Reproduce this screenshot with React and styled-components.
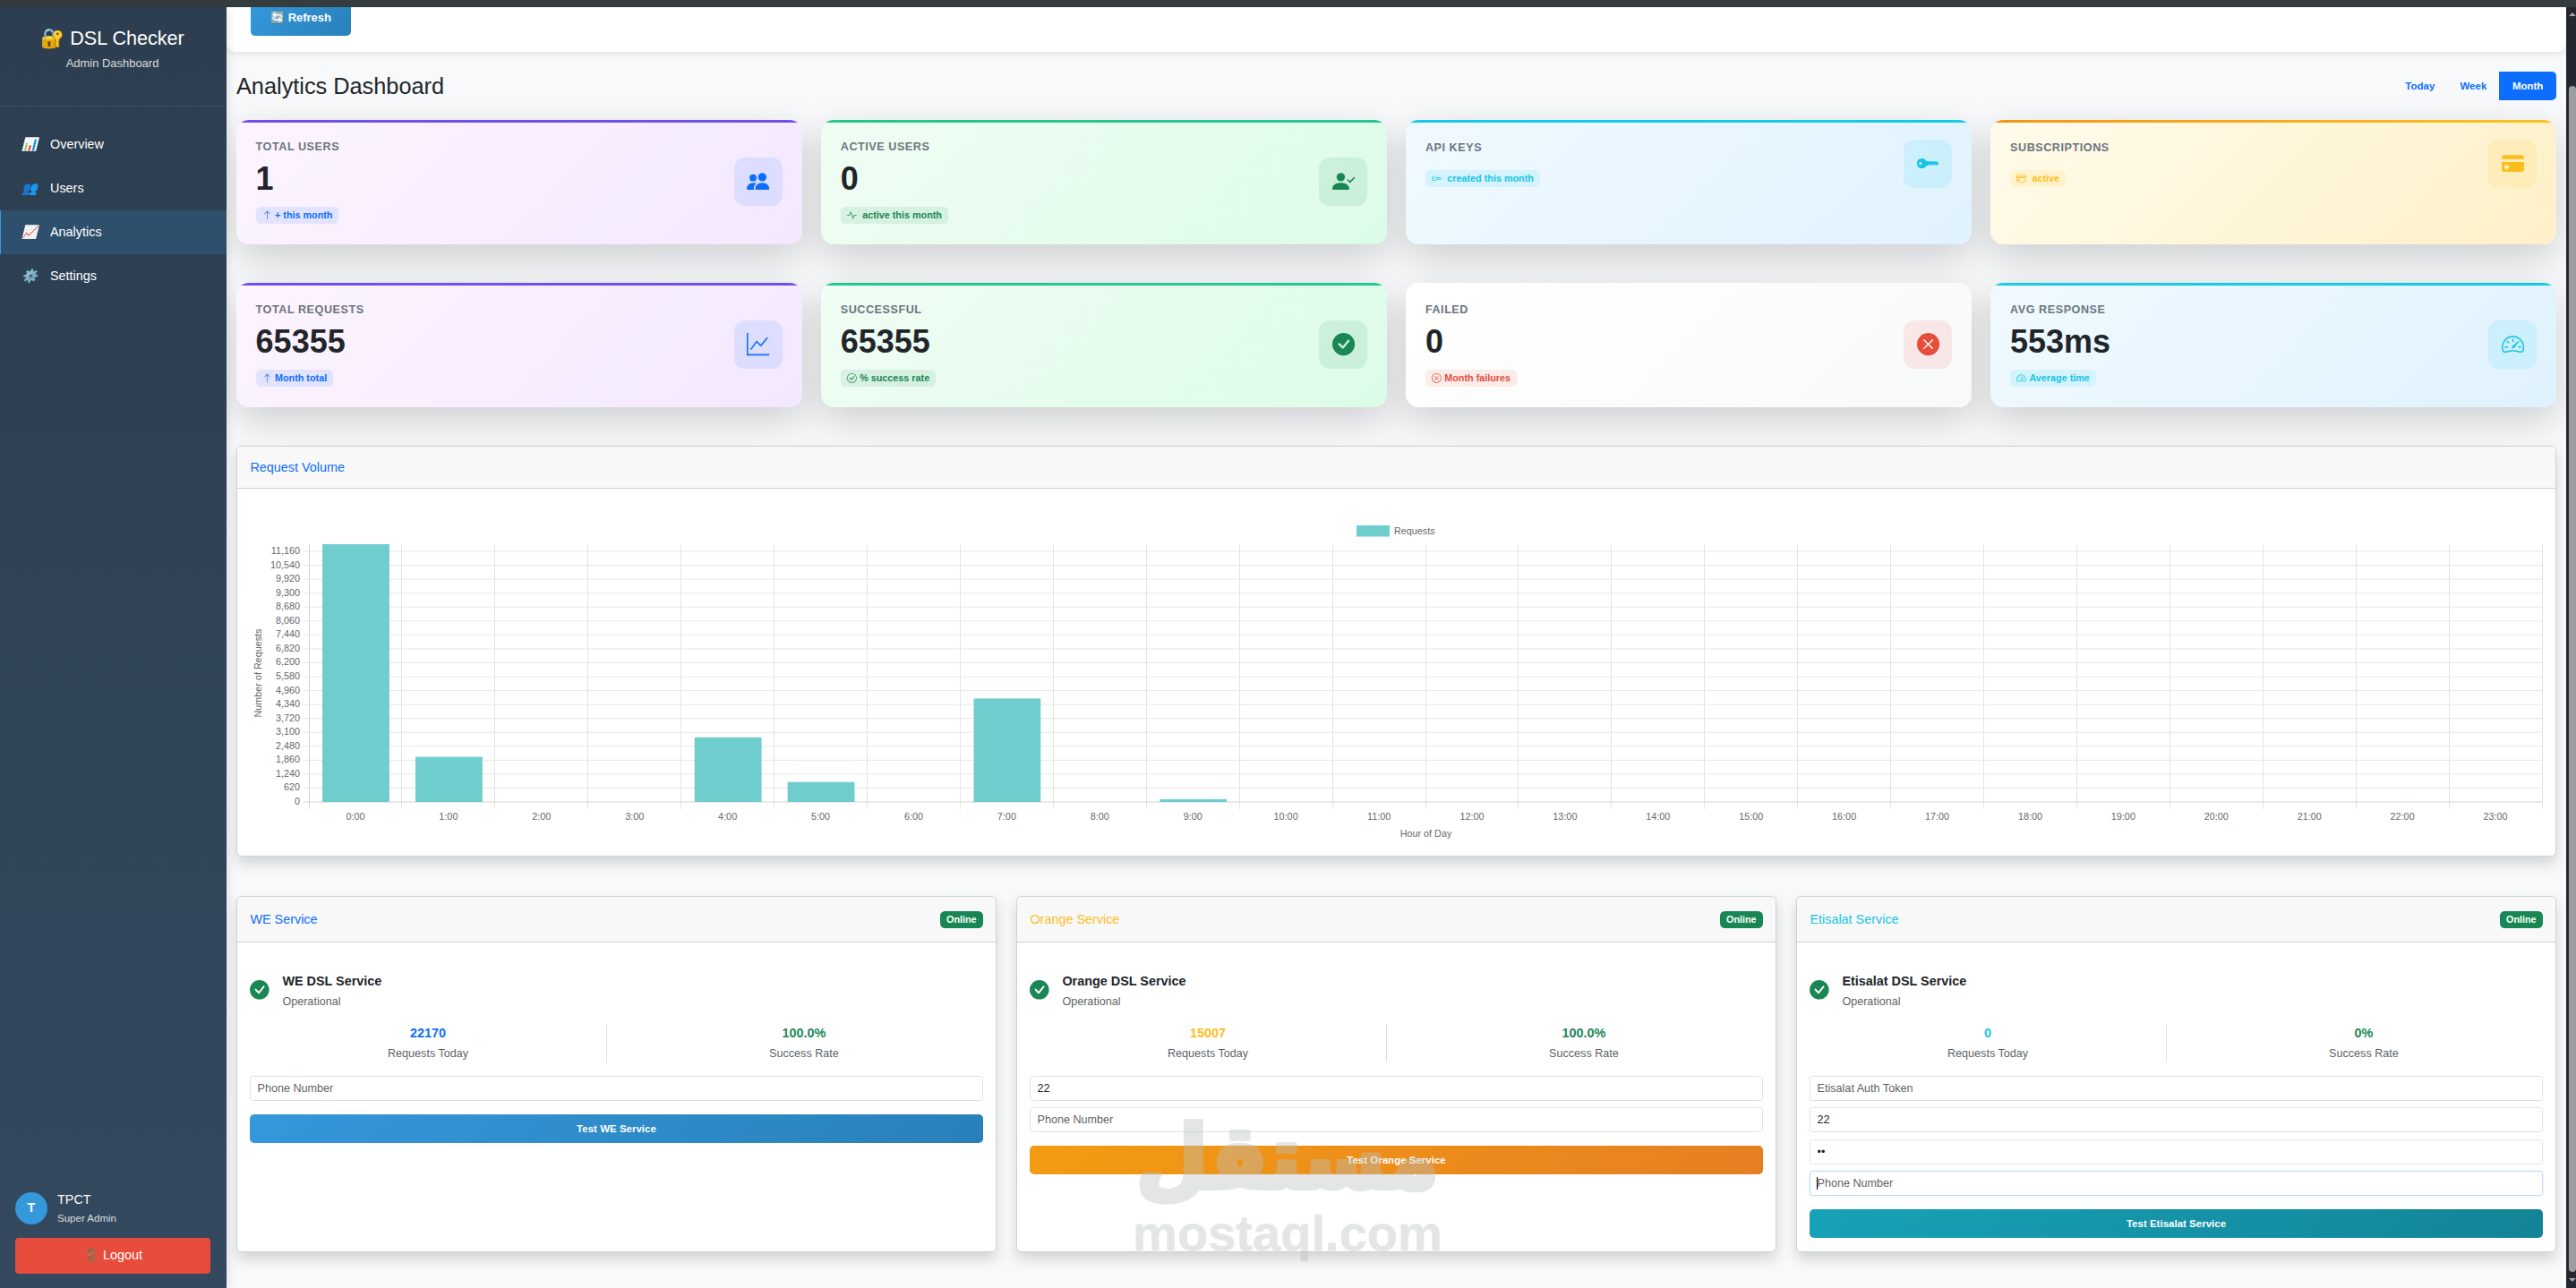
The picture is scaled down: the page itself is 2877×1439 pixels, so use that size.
import React from 'react'
import styled, { createGlobalStyle, css } from 'styled-components'
import {
    BsActivity, BsArrowUp, BsCheckCircle, BsCheckCircleFill, BsCreditCard, BsCreditCardFill,
    BsGraphUp, BsKey, BsKeyFill, BsPeopleFill, BsPersonCheckFill, BsSpeedometer2,
    BsXCircle, BsXCircleFill,
} from 'react-icons/bs'

const GlobalStyle = createGlobalStyle`
    * { box-sizing: border-box; }
    body {
        margin: 0;
        overflow: hidden;
        background: #f8f9fa;
        color: #212529;
        font-family: 'Liberation Sans', Arial, sans-serif;
        font-size: 14.4px;
        line-height: 1.5;
    }
    input, button { font-family: inherit; }
`

const tones = {
    blue: { color: '#0d6efd', soft: 'rgba(13, 110, 253, 0.1)' },
    green: { color: '#198754', soft: 'rgba(25, 135, 84, 0.1)' },
    cyan: { color: '#17c5e6', soft: 'rgba(13, 202, 240, 0.1)' },
    yellow: { color: '#fdbe1c', soft: 'rgba(255, 193, 7, 0.1)' },
    red: { color: '#e74c3c', soft: 'rgba(231, 76, 60, 0.1)' },
}

const surfaces = {
    purple: css`background: linear-gradient(135deg, #fdf4ff, #f3e8ff); --stripe: #6f50eb;`,
    green: css`background: linear-gradient(135deg, #f0fdf4, #dcfce7); --stripe: #25c78f;`,
    blue: css`background: linear-gradient(135deg, #f0f9ff, #e0f2fe); --stripe: #17c9e8;`,
    yellow: css`background: linear-gradient(135deg, #fffbeb, #fef0c8); --stripe: linear-gradient(90deg, #f39518, #ffc11f);`,
    plain: css`background: linear-gradient(135deg, #ffffff, #f8f9fa); --stripe: transparent;`,
}

const buttonFills = {
    blue: 'linear-gradient(135deg, #3498db, #2980b9)',
    orange: 'linear-gradient(135deg, #f39c12, #e67e22)',
    teal: 'linear-gradient(135deg, #17a2b8, #138496)',
}

const Window = styled.div`
    display: flex;
    flex-direction: column;
    width: 2877px;
    height: 1439px;
    overflow: hidden;
`

const BrowserEdge = styled.div`
    flex: none;
    height: 8px;
    background: #353c3f;
`

const Shell = styled.div`
    display: flex;
    flex: 1;
    min-height: 0;
`

/* ---------- sidebar ---------- */

const Sidebar = styled.aside`
    display: flex;
    flex-direction: column;
    flex: none;
    width: 253px;
    background: linear-gradient(180deg, #2c3e50, #34495e);
    color: #fff;
    box-shadow: 2px 0 10px rgba(0, 0, 0, 0.1);
    z-index: 1;
`

const Brand = styled.div`
    height: 111px;
    padding: 19px 2px 0 0;
    border-bottom: 1px solid #354c68;
    text-align: center;
`

const BrandName = styled.div`
    font-size: 21.6px;
    line-height: 32px;
`

const BrandSub = styled.div`
    margin-top: 2px;
    font-size: 12.96px;
    line-height: 19.4px;
    opacity: 0.8;
`

const Nav = styled.nav`
    padding-top: 18px;
`

const NavItem = styled.a`
    display: flex;
    align-items: center;
    height: 49px;
    padding-left: 21px;
    border-left: 1px solid ${p => (p.$active ? '#3498db' : 'transparent')};
    background: ${p => (p.$active ? '#2f506c' : 'none')};
`

const NavIcon = styled.i`
    width: 22px;
    margin-right: 12px;
    text-align: center;
`

const SidebarFoot = styled.div`
    margin-top: auto;
    height: 129px;
    padding: 21px 18px 0 17px;
    border-top: 1px solid #34506f;
`

const Profile = styled.div`
    display: flex;
    align-items: center;
    gap: 11px;
    height: 36px;
    margin-bottom: 15px;
`

const Avatar = styled.div`
    display: grid;
    place-items: center;
    width: 36px;
    height: 36px;
    border-radius: 50%;
    background: #3498db;
    font-weight: 700;
`

const ProfileName = styled.div`
    line-height: 21.6px;
`

const ProfileRole = styled.div`
    font-size: 11.52px;
    line-height: 18.3px;
    opacity: 0.8;
`

const LogoutButton = styled.button`
    width: 218px;
    height: 40px;
    padding: 0 0 1px;
    border: 0;
    border-radius: 4px;
    background: #e74c3c;
    color: #fff;
    font-size: 14.4px;
`

/* ---------- main column ---------- */

const Main = styled.main`
    flex: 1;
    min-width: 0;
    overflow: hidden;
`

const PageHeader = styled.header`
    display: flex;
    height: 50px;
    padding-left: 27px;
    border-radius: 0 0 10px 10px;
    background: #fff;
    box-shadow: 0 2px 10px rgba(0, 0, 0, 0.1);
`

const RefreshButton = styled.button`
    width: 112px;
    height: 32px;
    padding: 0 0 10px;
    border: 0;
    border-radius: 0 0 5px 5px;
    background: ${buttonFills.blue};
    color: #fff;
    font-size: 12.96px;
    font-weight: 700;
`

const Content = styled.div`
    padding: 22px 11px 0;
`

const TitleRow = styled.div`
    display: flex;
    align-items: center;
    justify-content: space-between;
    height: 32px;
    margin-bottom: 22px;
`

const Title = styled.h2`
    margin: 0;
    font-size: 25.3px;
    font-weight: 400;
    line-height: 32px;
`

const RangeGroup = styled.div`
    display: flex;
`

const RangeButton = styled.button`
    height: 32px;
    padding: 0 ${p => (p.$active ? 14.6 : 14)}px;
    border: 0;
    border-radius: 0 5px 5px 0;
    background: ${p => (p.$active ? '#0d6efd' : 'transparent')};
    color: ${p => (p.$active ? '#fff' : '#0d6efd')};
    font-size: 11.52px;
    font-weight: 700;
`

const StatGrid = styled.section`
    display: grid;
    grid-template-columns: repeat(4, 1fr);
    grid-auto-rows: 138.5px;
    gap: 43.7px 21.6px;
    margin-bottom: 43.5px;
`

const StatCard = styled.article`
    position: relative;
    padding: 21.6px;
    border-radius: 14.4px;
    overflow: hidden;
    ${p => surfaces[p.$surface]}

    &::before {
        content: '';
        position: absolute;
        inset: 0 0 auto;
        height: 3px;
        background: var(--stripe);
    }
`

/* the shadow sits outside the clipped card */
const StatShadow = styled.div`
    display: grid;
    border-radius: 14.4px;
    box-shadow: 0 14.4px 43.2px rgba(0, 0, 0, 0.175);
`

const StatBody = styled.div`
    display: flex;
    align-items: center;
    justify-content: space-between;
`

const StatLabel = styled.div`
    margin-bottom: 5px;
    color: #6c757d;
    font-size: 12.6px;
    font-weight: 700;
    letter-spacing: 0.55px;
    line-height: 17.6px;
    text-transform: uppercase;
`

const StatValue = styled.div`
    min-height: 1px;
    font-size: 36px;
    font-weight: 700;
    line-height: 43.2px;
`

const Chip = styled.span`
    display: flex;
    align-items: center;
    gap: ${p => (p.$wide ? 6.6 : 3.6)}px;
    width: fit-content;
    height: 19px;
    margin-top: 9.6px;
    padding: 0 7px;
    border-radius: 5.4px;
    background: ${p => tones[p.$tone].soft};
    color: ${p => tones[p.$tone].color};
    font-size: 10.8px;
    font-weight: 700;
    line-height: 19px;
`

const IconBox = styled.div`
    display: grid;
    place-items: center;
    width: 54px;
    height: 54px;
    border-radius: 12px;
    background: ${p => tones[p.$tone].soft};
    color: ${p => tones[p.$tone].color};
    font-size: 25.2px;
`

const Panel = styled.section`
    display: flex;
    flex-direction: column;
    border: 1px solid #cfd1d2;
    border-radius: 5.4px;
    background: #fff;
    box-shadow: 0 7.2px 14.4px rgba(0, 0, 0, 0.15);
`

const PanelHead = styled.div`
    display: flex;
    align-items: center;
    justify-content: space-between;
    height: ${p => p.$height}px;
    padding: 0 14.4px;
    border-bottom: 1px solid #cfd1d2;
    border-radius: 5px 5px 0 0;
    background: #f8f8f8;
`

const PanelTitle = styled.h6`
    margin: ${p => p.$drop || 0}px 0 0;
    color: ${p => tones[p.$tone].color};
    font-size: 14.4px;
    font-weight: 400;
`

const ChartPanel = styled(Panel)`
    height: 459px;
    margin-bottom: 44.3px;

    svg { display: block; }
`

/* ---------- services ---------- */

const ServiceGrid = styled.section`
    display: grid;
    grid-template-columns: repeat(3, 1fr);
    gap: 22px;
    height: 397.6px;
`

const OnlineBadge = styled.span`
    height: 19px;
    padding: 0 7px;
    border-radius: 5.4px;
    background: #198754;
    color: #fff;
    font-size: 10.8px;
    font-weight: 700;
    line-height: 19px;
`

const ServiceBody = styled.div`
    padding: 32.4px 14.4px 0;
`

const ServiceStatus = styled.div`
    display: flex;
    align-items: center;
    gap: 14.4px;
    margin-bottom: 15.4px;

    svg { margin-bottom: 2px; color: #198754; font-size: 21.6px; }
`

const ServiceName = styled.div`
    margin-bottom: 2.2px;
    font-weight: 700;
`

const Muted = styled.div`
    color: rgba(33, 37, 41, 0.75);
    font-size: 12.6px;
    line-height: 18.9px;
`

const Figures = styled.div`
    display: grid;
    grid-template-columns: 1fr 1fr;
    gap: 21.6px;
    margin-bottom: 15.2px;
    text-align: center;
`

const Figure = styled.div`
    border-right: 1px solid ${p => (p.$ruled ? '#dee2e6' : 'transparent')};
`

const FigureValue = styled.div`
    margin-bottom: 2.2px;
    color: ${p => tones[p.$tone].color};
    font-weight: 700;
`

const Fields = styled.div`
    display: grid;
    gap: 7.3px;
    margin-bottom: 14.6px;
`

const Field = styled.div`
    position: relative;
    height: 28.1px;
`

const Input = styled.input`
    display: block;
    width: 100%;
    height: 28.1px;
    padding: 0 7.2px;
    border: 1px solid ${p => (p.$focused ? '#c3dbee' : '#dee2e6')};
    border-radius: 3.6px;
    outline: 0;
    background: #fff;
    color: #212529;
    font-size: 12.6px;
    box-shadow: ${p => (p.$focused ? '0 0 0 1px rgba(52, 152, 219, 0.08)' : 'none')};

    &::placeholder { color: rgba(33, 37, 41, 0.75); opacity: 1; }
`

const Caret = styled.span`
    position: absolute;
    top: 7px;
    left: 8px;
    width: 1px;
    height: 14px;
    background: #000;
`

const TestButton = styled.button`
    display: block;
    width: 100%;
    height: 32px;
    padding: 0;
    border: 0;
    border-radius: 5px;
    background: ${p => buttonFills[p.$fill]};
    color: #fff;
    font-size: 11.52px;
    font-weight: 700;
`

/* ---------- scrollbar and watermark ---------- */

const Scrollbar = styled.div`
    display: flex;
    flex-direction: column;
    align-items: center;
    flex: none;
    width: 11px;
    padding: 6px 0 7px 3px;
    background: #24272f;
    z-index: 1;
`

const ScrollArrow = styled.div`
    width: 0;
    height: 0;
    border: 4px solid transparent;
    border-top-width: ${p => (p.$down ? 4 : 0)}px;
    border-bottom-width: ${p => (p.$down ? 0 : 4)}px;
    border-top-color: ${p => (p.$down ? '#a5a8a7' : 'transparent')};
    border-bottom-color: ${p => (p.$down ? 'transparent' : '#a5a8a7')};
`

const ScrollThumb = styled.div`
    width: 8px;
    flex: 1;
    margin: 78px 0 7px;
    border-radius: 4px;
    background: #9b9e9d;
`

const Watermark = styled.svg`
    position: absolute;
    left: 1256px;
    top: 1230px;
    z-index: 2;
    overflow: visible;
    opacity: 0.4;
    pointer-events: none;
`

/* ---------- data ---------- */

const navItems = [
    { icon: '📊', text: 'Overview' },
    { icon: '👥', text: 'Users' },
    { icon: '📈', text: 'Analytics', active: true },
    { icon: '⚙️', text: 'Settings' },
]

const stats = [
    { label: 'Total Users', value: '1', chip: '+ this month', surface: 'purple', tone: 'blue', ChipIcon: BsArrowUp, Icon: BsPeopleFill },
    { label: 'Active Users', value: '0', chip: 'active this month', wide: true, surface: 'green', tone: 'green', ChipIcon: BsActivity, Icon: BsPersonCheckFill },
    { label: 'API Keys', chip: 'created this month', wide: true, surface: 'blue', tone: 'cyan', ChipIcon: BsKey, Icon: BsKeyFill },
    { label: 'Subscriptions', chip: 'active', wide: true, surface: 'yellow', tone: 'yellow', ChipIcon: BsCreditCard, Icon: BsCreditCardFill },
    { label: 'Total Requests', value: '65355', chip: 'Month total', surface: 'purple', tone: 'blue', ChipIcon: BsArrowUp, Icon: BsGraphUp },
    { label: 'Successful', value: '65355', chip: '% success rate', surface: 'green', tone: 'green', ChipIcon: BsCheckCircle, Icon: BsCheckCircleFill },
    { label: 'Failed', value: '0', chip: 'Month failures', surface: 'plain', tone: 'red', ChipIcon: BsXCircle, Icon: BsXCircleFill },
    { label: 'Avg Response', value: '553ms', chip: 'Average time', surface: 'blue', tone: 'cyan', ChipIcon: BsSpeedometer2, Icon: BsSpeedometer2 },
]

const hourly = [11480, 2010, 0, 0, 2880, 890, 0, 4610, 0, 125, 0, 0, 0, 0, 0, 0, 0, 0, 0, 0, 0, 0, 0, 0]

const services = [
    {
        name: 'WE', tone: 'blue', fill: 'blue', requests: '22170', rate: '100.0%',
        fields: [{ placeholder: 'Phone Number' }],
    },
    {
        name: 'Orange', tone: 'yellow', fill: 'orange', requests: '15007', rate: '100.0%',
        fields: [{ value: '22' }, { placeholder: 'Phone Number' }],
    },
    {
        name: 'Etisalat', tone: 'cyan', fill: 'teal', requests: '0', rate: '0%',
        fields: [
            { placeholder: 'Etisalat Auth Token' },
            { value: '22' },
            { value: '22', type: 'password' },
            { placeholder: 'Phone Number', focused: true },
        ],
    },
]

const Stat = ({ label, value, chip, wide, surface, tone, ChipIcon, Icon }) => {
    return (
        <StatShadow>
            <StatCard $surface={surface}>
                <StatBody>
                    <div>
                        <StatLabel>{label}</StatLabel>
                        <StatValue>{value}</StatValue>
                        <Chip $tone={tone} $wide={wide}><ChipIcon />{chip}</Chip>
                    </div>
                    <IconBox $tone={tone}><Icon /></IconBox>
                </StatBody>
            </StatCard>
        </StatShadow>
    )
}

const RequestChart = () => {
    const left = 80.5
    const right = 2574.5
    const top = 62
    const bottom = 350
    const max = 11480
    const step = (right - left) / hourly.length
    const y = v => bottom - (v / max) * (bottom - top)
    const ticks = Array.from({ length: 19 }, (_, i) => i * 620)

    return (
        <svg width="2589" height="410" fontSize="10.8" fill="#666">
            <rect x="1250" y="41" width="37" height="12.5" fill="#6fcdcd" />
            <text x="1292" y="51">Requests</text>
            {ticks.map(t => (
                <g key={t}>
                    <line x1={left - 7} x2={right} y1={y(t)} y2={y(t)} stroke={t ? '#e7e7e7' : '#d3d3d3'} />
                    <text x="70" y={y(t) + 3} textAnchor="end">{t.toLocaleString('en-US')}</text>
                </g>
            ))}
            {[...hourly, 0].map((_, i) => (
                <line
                    key={i}
                    x1={Math.round(left + i * step) - 0.5}
                    x2={Math.round(left + i * step) - 0.5}
                    y1={top}
                    y2={bottom + 8}
                    stroke={i ? '#e3e3e3' : '#d3d3d3'}
                />
            ))}
            {hourly.map((v, i) => (
                <g key={i}>
                    {v > 0 && <rect x={left + (i + 0.14) * step} y={y(v)} width={step * 0.72} height={bottom - y(v)} fill="#6fcdcd" />}
                    <text x={left + (i + 0.5) * step - 0.5} y="370" textAnchor="middle">{i}:00</text>
                </g>
            ))}
            <text x={(left + right) / 2} y="389" textAnchor="middle">Hour of Day</text>
            <text transform="translate(27 206) rotate(-90)" textAnchor="middle">Number of Requests</text>
        </svg>
    )
}

const Service = ({ name, tone, fill, requests, rate, fields }) => {
    return (
        <Panel>
            <PanelHead $height={51}>
                <PanelTitle $tone={tone}>{name} Service</PanelTitle>
                <OnlineBadge>Online</OnlineBadge>
            </PanelHead>
            <ServiceBody>
                <ServiceStatus>
                    <BsCheckCircleFill />
                    <div>
                        <ServiceName>{name} DSL Service</ServiceName>
                        <Muted>Operational</Muted>
                    </div>
                </ServiceStatus>
                <Figures>
                    <Figure $ruled>
                        <FigureValue $tone={tone}>{requests}</FigureValue>
                        <Muted>Requests Today</Muted>
                    </Figure>
                    <Figure>
                        <FigureValue $tone="green">{rate}</FigureValue>
                        <Muted>Success Rate</Muted>
                    </Figure>
                </Figures>
                <Fields>
                    {fields.map((f, i) => (
                        <Field key={i}>
                            <Input type={f.type || 'text'} placeholder={f.placeholder} defaultValue={f.value} $focused={f.focused} />
                            {f.focused && <Caret />}
                        </Field>
                    ))}
                </Fields>
                <TestButton $fill={fill}>Test {name} Service</TestButton>
            </ServiceBody>
        </Panel>
    )
}

const App = () => {
    return (
        <Window>
            <GlobalStyle />
            <BrowserEdge />
            <Shell>
                <Sidebar>
                    <Brand>
                        <BrandName>🔐 DSL Checker</BrandName>
                        <BrandSub>Admin Dashboard</BrandSub>
                    </Brand>
                    <Nav>
                        {navItems.map(item => (
                            <NavItem key={item.text} $active={item.active}>
                                <NavIcon>{item.icon}</NavIcon>
                                {item.text}
                            </NavItem>
                        ))}
                    </Nav>
                    <SidebarFoot>
                        <Profile>
                            <Avatar>T</Avatar>
                            <div>
                                <ProfileName>TPCT</ProfileName>
                                <ProfileRole>Super Admin</ProfileRole>
                            </div>
                        </Profile>
                        <LogoutButton>🚪 Logout</LogoutButton>
                    </SidebarFoot>
                </Sidebar>
                <Main>
                    <PageHeader>
                        <RefreshButton>🔄 Refresh</RefreshButton>
                    </PageHeader>
                    <Content>
                        <TitleRow>
                            <Title>Analytics Dashboard</Title>
                            <RangeGroup>
                                <RangeButton>Today</RangeButton>
                                <RangeButton>Week</RangeButton>
                                <RangeButton $active>Month</RangeButton>
                            </RangeGroup>
                        </TitleRow>
                        <StatGrid>
                            {stats.map(s => <Stat key={s.label} {...s} />)}
                        </StatGrid>
                        <ChartPanel>
                            <PanelHead $height={47}>
                                <PanelTitle $tone="blue" $drop={2}>Request Volume</PanelTitle>
                            </PanelHead>
                            <RequestChart />
                        </ChartPanel>
                        <ServiceGrid>
                            {services.map(s => <Service key={s.name} {...s} />)}
                        </ServiceGrid>
                    </Content>
                </Main>
                <Scrollbar>
                    <ScrollArrow />
                    <ScrollThumb />
                    <ScrollArrow $down />
                </Scrollbar>
            </Shell>
            <Watermark width="364" height="190" fill="#bbc1c0" stroke="#bbc1c0" strokeLinejoin="round" fontWeight="700">
                <text
                    x="182"
                    y="97"
                    textAnchor="middle"
                    fontFamily="'DejaVu Sans', sans-serif"
                    fontSize="98"
                    strokeWidth="6"
                    textLength="338"
                    lengthAdjust="spacingAndGlyphs"
                >
                    مستقل
                </text>
                <text x="9" y="167" fontSize="55" strokeWidth="0.5" textLength="346" lengthAdjust="spacingAndGlyphs">mostaql.com</text>
            </Watermark>
        </Window>
    )
}

export default App
